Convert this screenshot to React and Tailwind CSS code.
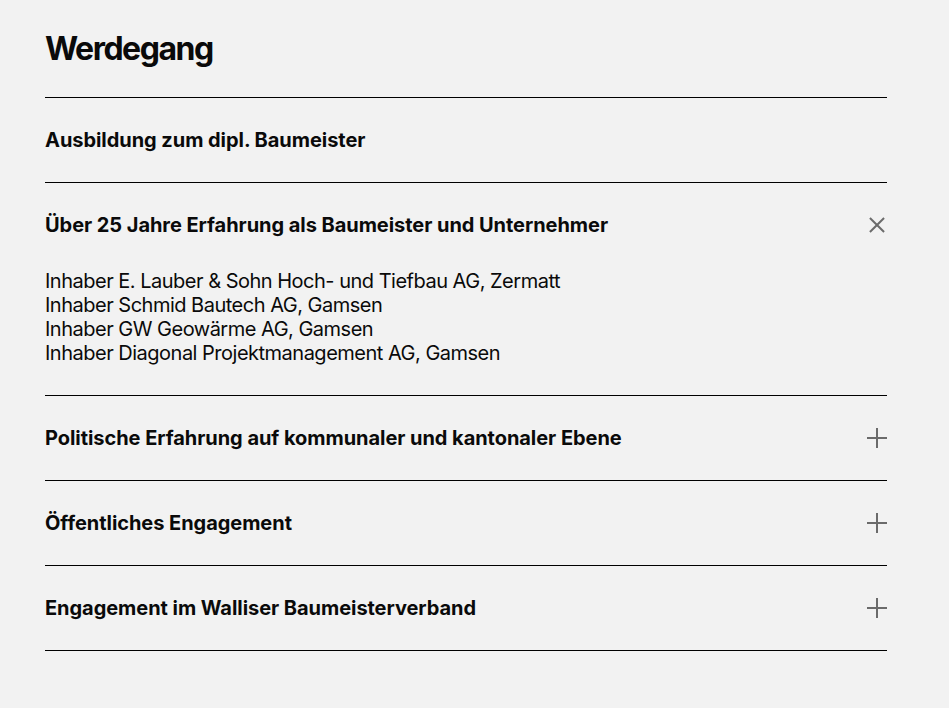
import React, { useState } from "react";

const items = [
  { title: "Ausbildung zum dipl. Baumeister", body: [] },
  {
    title: "Über 25 Jahre Erfahrung als Baumeister und Unternehmer",
    body: [
      "Inhaber E. Lauber & Sohn Hoch- und Tiefbau AG, Zermatt",
      "Inhaber Schmid Bautech AG, Gamsen",
      "Inhaber GW Geowärme AG, Gamsen",
      "Inhaber Diagonal Projektmanagement AG, Gamsen",
    ],
  },
  { title: "Politische Erfahrung auf kommunaler und kantonaler Ebene", body: ["—"] },
  { title: "Öffentliches Engagement", body: ["—"] },
  { title: "Engagement im Walliser Baumeisterverband", body: ["—"] },
];

function Toggle({ open }) {
  return (
    <span
      className={`relative block w-5 h-5 shrink-0 transition-transform ${open ? "rotate-45" : ""}`}
    >
      <span className="absolute left-0 top-[9px] w-5 h-[1.5px] bg-[#6b6b6b]" />
      <span className="absolute top-0 left-[9px] h-5 w-[1.5px] bg-[#6b6b6b]" />
    </span>
  );
}

export default function App() {
  const [open, setOpen] = useState(1);
  return (
    <div
      className="min-h-[708px] bg-[#f2f2f2] text-[#0a0a0a] px-[45px] pt-[30px]"
      style={{ fontFamily: "Inter, 'Noto Sans', sans-serif" }}
    >
      <div className="w-[842px]">
        <h2 className="text-[32px] leading-[38px] font-bold tracking-[-1.5px] mb-[29px]">
          Werdegang
        </h2>
        <div className="border-t border-black">
          {items.map((it, i) => {
            const isOpen = open === i;
            const hasBody = i !== 0;
            return (
              <div key={i} className="border-b border-black py-[30px]">
                <button
                  type="button"
                  onClick={() => setOpen(isOpen ? -1 : i)}
                  className="w-full flex items-center justify-between text-left"
                >
                  <span className="text-[20px] leading-[24px] font-bold tracking-[-0.05px]">
                    {it.title}
                  </span>
                  {hasBody && <Toggle open={isOpen} />}
                </button>
                {isOpen && (
                  <div className="mt-[32px] text-[20px] leading-[24px] tracking-[-0.5px]">
                    {it.body.map((line) => (
                      <div key={line}>{line}</div>
                    ))}
                  </div>
                )}
              </div>
            );
          })}
        </div>
      </div>
    </div>
  );
}
